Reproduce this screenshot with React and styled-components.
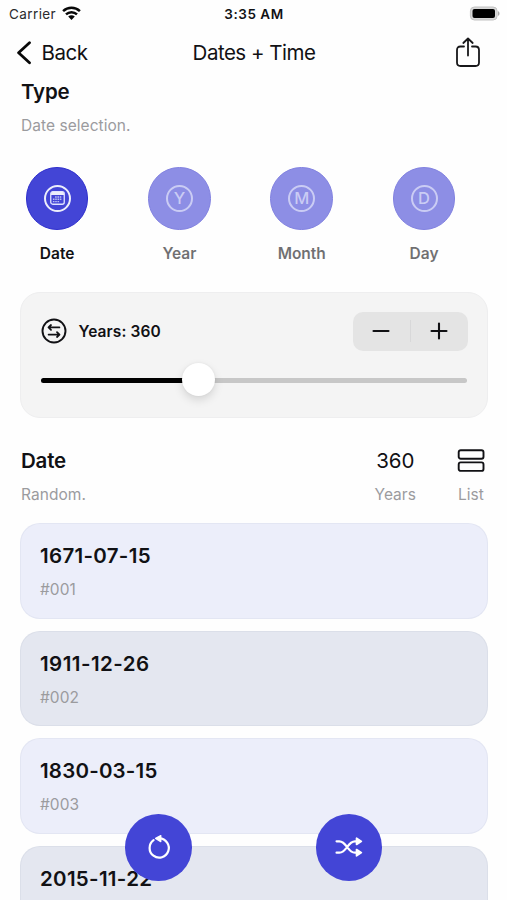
import styled, { createGlobalStyle } from 'styled-components'
import { useState } from 'react'


const GlobalStyle = createGlobalStyle`
    * {
        box-sizing : border-box;
    }
    body {
        margin : 0;
        background : #fefefe;
        font-family : Inter, "Liberation Sans", sans-serif;
        color : #111114;
    }
    button {
        font : inherit;
        letter-spacing : inherit;
        color : inherit;
        border : none;
        padding : 0;
        background : none;
    }
`
const Screen = styled.main`
    position : relative;
    width : 507px;
    height : 900px;
    overflow : hidden;
`
const StatusBar = styled.header`
    display : grid;
    grid-template-columns : 1fr auto 1fr;
    align-items : center;
    height : 27px;
    padding : 0 7px 0 9px;
    font-size : 13.5px;
`
const Carrier = styled.div`
    display : flex;
    align-items : center;
    gap : 6px;
    letter-spacing : 0.4px;
    color : #2b2b2d;
`
const Clock = styled.span`
    font-weight : 600;
    letter-spacing : 0.55px;
    transform : translateX(-0.5px);
`
const Battery = styled.svg`
    justify-self : end;
`
const NavBar = styled.nav`
    display : grid;
    grid-template-columns : 1fr auto 1fr;
    align-items : center;
    height : 51px;
    padding : 0 26px 0 16px;
    font-size : 20.5px;
    letter-spacing : -0.5px;
`
const BackButton = styled.button`
    display : flex;
    align-items : center;
    gap : 10.5px;
`
const NavTitle = styled.span`
    transform : translateX(5.5px);
`
const ShareButton = styled.button`
    justify-self : end;
    display : flex;
`
const Heading = styled.h2`
    margin : 0;
    font-size : 20.5px;
    line-height : 28px;
    font-weight : 600;
    letter-spacing : -0.2px;
`
const Caption = styled.p`
    margin : 0;
    font-size : 15.5px;
    line-height : 20px;
    letter-spacing : 0.05px;
    color : #9b9b9e;
`
const TypeHeader = styled.section`
    display : flex;
    flex-direction : column;
    gap : 10px;
    padding : 0 21px;
`
const TypeList = styled.section`
    display : grid;
    grid-template-columns : repeat(4, 122.3px);
    margin : 31px 0 0 -4px;
`
const TypeItem = styled.button`
    display : flex;
    flex-direction : column;
    align-items : center;
    gap : 14.5px;
    font-size : 15.5px;
    line-height : 20px;
    font-weight : 600;
    opacity : ${props => props.$active ? 1 : 0.6};
`
const TypeCircle = styled.span`
    display : flex;
    align-items : center;
    justify-content : center;
    width : 62.5px;
    height : 62.5px;
    border-radius : 50%;
    border : 1px solid #3030cd;
    background : #4345d6;
`
const Ring = styled.span`
    display : flex;
    align-items : center;
    justify-content : center;
    width : 27px;
    height : 27px;
    border-radius : 50%;
    border : 2px solid;
    color : ${props => props.$active ? '#eceefb' : '#a9acee'};
    font-size : 16.5px;
    font-weight : 500;
`
const SliderCard = styled.section`
    width : 468px;
    height : 126px;
    margin : 28px 0 0 20px;
    padding : 19px 19.5px 0 20px;
    border : 1px solid #eeeeef;
    border-radius : 20px;
    background : #f4f4f4;
`
const SliderTop = styled.div`
    display : flex;
    align-items : center;
    gap : 11.5px;
    height : 38.5px;
`
const SliderLabel = styled.span`
    flex : 1;
    font-size : 15.5px;
    font-weight : 600;
    letter-spacing : 0.1px;
`
const Stepper = styled.div`
    display : grid;
    grid-template-columns : 1fr 1px 1fr;
    align-items : center;
    width : 115px;
    height : 38.5px;
    border-radius : 10px;
    background : #e4e4e4;
`
const StepButton = styled.button`
    display : flex;
    align-items : center;
    justify-content : center;
    height : 100%;
`
const StepDivider = styled.span`
    height : 22px;
    background : #d8d8d9;
`
const Track = styled.div`
    position : relative;
    height : 5px;
    margin : 27.5px 0.5px 0 0;
    border-radius : 3px;
    background : #c7c7c7;
`
const TrackFill = styled.div`
    height : 100%;
    border-radius : 3px;
    background : #000;
`
const Knob = styled.div`
    position : absolute;
    top : -15.5px;
    width : 33.5px;
    height : 33.5px;
    margin-left : -17px;
    border-radius : 50%;
    background : #fff;
    box-shadow : 0 4px 10px rgba(0, 0, 0, 0.13), 0 0 3px rgba(0, 0, 0, 0.06);
`
const ResultHeader = styled.section`
    display : flex;
    margin-top : 28.6px;
    padding : 0 22px 0 21px;
`
const ResultColumn = styled.div`
    display : flex;
    flex-direction : column;
    align-items : center;
    gap : 10px;
    margin-left : 41px;

    &:first-child {
        align-items : flex-start;
        margin : 0 auto 0 0;
    }
`
const Count = styled.span`
    font-size : 20.5px;
    line-height : 28px;
    letter-spacing : -0.1px;
`
const IconSlot = styled.span`
    display : flex;
    align-items : center;
    height : 28px;
`
const Cards = styled.section`
    display : flex;
    flex-direction : column;
    gap : 12px;
    padding : 0 19px 0 20px;
    margin-top : 18.4px;
`
const Card = styled.article`
    height : 95.7px;
    flex-shrink : 0;
    padding : 18px 19px;
    border : 1px solid rgba(90, 100, 140, 0.06);
    border-radius : 20px;
    background : #eceefa;

    &:nth-child(even) {
        background : #e4e7f0;
    }
`
const CardDate = styled.h3`
    margin : 0 0 10px;
    font-size : 20.5px;
    line-height : 28px;
    font-weight : 600;
    letter-spacing : ${props => props.$spacing};
`
const FloatingBar = styled.div`
    position : absolute;
    left : 125.3px;
    bottom : 19.5px;
    display : flex;
    gap : 124px;
`
const RoundButton = styled.button`
    display : flex;
    align-items : center;
    justify-content : center;
    width : 66.5px;
    height : 66.5px;
    border-radius : 50%;
    background : #4345d6;
`

const types = [
    { name : 'Date' },
    { name : 'Year', letter : 'Y' },
    { name : 'Month', letter : 'M' },
    { name : 'Day', letter : 'D' }
]

const dates = [
    { date : '1671-07-15', number : '#001', spacing : '0.3px' },
    { date : '1911-12-26', number : '#002', spacing : '0.45px' },
    { date : '1830-03-15', number : '#003', spacing : '0.2px' },
    { date : '2015-11-22', spacing : '0.3px' }
]

const WifiIcon = () => (
    <svg width="19" height="15" viewBox="0 0 19 15">
        <g fill="none" stroke="#080808" strokeWidth="2.5">
            <path d="M1.1 5.1C5.8 .6 13.2 .6 17.9 5.1"/>
            <path d="M4 8.3c3.1-2.9 7.9-2.9 11 0"/>
        </g>
        <path d="M6.2 10.6c1.9-1.7 4.7-1.7 6.6 0L9.5 14z" fill="#080808"/>
    </svg>
)

const CalendarIcon = () => (
    <svg width="15" height="14" viewBox="0 0 15 14">
        <rect x=".75" y=".75" width="13.5" height="12.5" rx="2" fill="none" stroke="#dfe3ff" strokeWidth="1.3"/>
        <path d="M1 2.5Q1 1 2.5 1h10Q14 1 14 2.5V4H1z" fill="#eceefb"/>
        <g stroke="#b9bdf5" strokeWidth="1.4" strokeDasharray="1.6 .7">
            <path d="M5.1 6H12"/>
            <path d="M2.9 8.3H12"/>
            <path d="M2.9 10.6H9.2"/>
        </g>
    </svg>
)

const SwapIcon = () => (
    <svg width="26" height="26" viewBox="0 0 26 26" fill="none" stroke="#111114" strokeWidth="1.9" strokeLinecap="round" strokeLinejoin="round">
        <circle cx="13" cy="13" r="11.5"/>
        <path d="M18.4 9.4H7.8M10 7 7.5 9.4l2.5 2.4M7.6 16.6h10.6M16 14.2l2.5 2.4-2.5 2.4" strokeWidth="1.8"/>
    </svg>
)

export default function App(){

    const [active, setActive] = useState('Date')
    const [years, setYears] = useState(360)

    const fill = 37 + (years - 360) / 10

    return(
        <Screen>
            <GlobalStyle/>
            <StatusBar>
                <Carrier>Carrier <WifiIcon/></Carrier>
                <Clock>3:35 AM</Clock>
                <Battery width="31" height="15" viewBox="0 0 31 15">
                    <rect x="1.4" y="1" width="26.7" height="13" rx="4" fill="#d8d8d8" stroke="#c2c2c2"/>
                    <rect x="3.5" y="3" width="22.5" height="9" rx="2" fill="#000"/>
                    <path d="M29 5.2c2 .7 2 3.9 0 4.6z" fill="#aaa"/>
                </Battery>
            </StatusBar>

            <NavBar>
                <BackButton>
                    <svg width="15" height="24" viewBox="0 0 15 24" fill="none" stroke="#080808" strokeWidth="2.8" strokeLinecap="round" strokeLinejoin="round">
                        <path d="M13.5 1.8 2.6 11.8 13.5 21.8"/>
                    </svg>
                    Back
                </BackButton>
                <NavTitle>Dates + Time</NavTitle>
                <ShareButton aria-label="Share">
                    <svg width="26" height="31" viewBox="0 0 26 31" fill="none" stroke="#18181a" strokeWidth="1.8" strokeLinecap="round" strokeLinejoin="round">
                        <path d="M9 9.5H5.5Q2 9.5 2 13V25.5Q2 29 5.5 29h15Q24 29 24 25.5V13Q24 9.5 20.5 9.5H17M13 18.5V1.8M8.3 6 13 1.5l4.7 4.5"/>
                    </svg>
                </ShareButton>
            </NavBar>

            <TypeHeader>
                <Heading>Type</Heading>
                <Caption>Date selection.</Caption>
            </TypeHeader>

            <TypeList>
                {types.map(type => (
                    <TypeItem key={type.name} $active={active === type.name} onClick={()=> setActive(type.name)}>
                        <TypeCircle>
                            <Ring $active={active === type.name}>{type.letter || <CalendarIcon/>}</Ring>
                        </TypeCircle>
                        {type.name}
                    </TypeItem>
                ))}
            </TypeList>

            <SliderCard>
                <SliderTop>
                    <SwapIcon/>
                    <SliderLabel>Years: {years}</SliderLabel>
                    <Stepper>
                        <StepButton aria-label="Decrease" onClick={()=> setYears(years - 1)}>
                            <svg width="18" height="18" viewBox="0 0 18 18" stroke="#111114" strokeWidth="2.1" strokeLinecap="round">
                                <path d="M1.5 9h15"/>
                            </svg>
                        </StepButton>
                        <StepDivider/>
                        <StepButton aria-label="Increase" onClick={()=> setYears(years + 1)}>
                            <svg width="18" height="18" viewBox="0 0 18 18" stroke="#111114" strokeWidth="2.1" strokeLinecap="round">
                                <path d="M1.5 9h15M9 1.5v15"/>
                            </svg>
                        </StepButton>
                    </Stepper>
                </SliderTop>
                <Track>
                    <TrackFill style={{ width : `${fill}%` }}/>
                    <Knob style={{ left : `${fill}%` }}/>
                </Track>
            </SliderCard>

            <ResultHeader>
                <ResultColumn>
                    <Heading>Date</Heading>
                    <Caption>Random.</Caption>
                </ResultColumn>
                <ResultColumn>
                    <Count>{years}</Count>
                    <Caption>Years</Caption>
                </ResultColumn>
                <ResultColumn>
                    <IconSlot>
                        <svg width="28" height="24" viewBox="0 0 28 24" fill="none" stroke="#111114" strokeWidth="1.9">
                            <rect x="1.7" y="1.2" width="24.8" height="8.5" rx="2"/>
                            <rect x="1.7" y="13.4" width="24.8" height="8.5" rx="2"/>
                        </svg>
                    </IconSlot>
                    <Caption>List</Caption>
                </ResultColumn>
            </ResultHeader>

            <Cards>
                {dates.map(({ date, number, spacing }) => (
                    <Card key={date}>
                        <CardDate $spacing={spacing}>{date}</CardDate>
                        {number && <Caption>{number}</Caption>}
                    </Card>
                ))}
            </Cards>

            <FloatingBar>
                <RoundButton aria-label="Reset">
                    <svg width="26" height="26" viewBox="0 0 26 26" fill="none" stroke="#fff" strokeWidth="2.2" strokeLinecap="round">
                        <path d="M13.5 4.4A9.6 9.6 0 1 1 7.6 6.2"/>
                        <path d="M14.8 1.6v6L9.6 4.4z" fill="#fff" strokeWidth="1.3" strokeLinejoin="round"/>
                    </svg>
                </RoundButton>
                <RoundButton aria-label="Shuffle">
                    <svg width="28" height="22" viewBox="0 0 26 22" preserveAspectRatio="none" fill="none" stroke="#fff" strokeWidth="2.2" strokeLinecap="round">
                        <path d="M1.5 5.3H4C11 5.3 11.5 16.7 18.5 16.7h2M1.5 16.7H4C11 16.7 11.5 5.3 18.5 5.3h2"/>
                        <path d="M20 2.1v6.4L24.5 5.3zM20 13.5v6.4L24.5 16.7z" fill="#fff" strokeWidth="1.6" strokeLinejoin="round"/>
                    </svg>
                </RoundButton>
            </FloatingBar>
        </Screen>
    )
}
